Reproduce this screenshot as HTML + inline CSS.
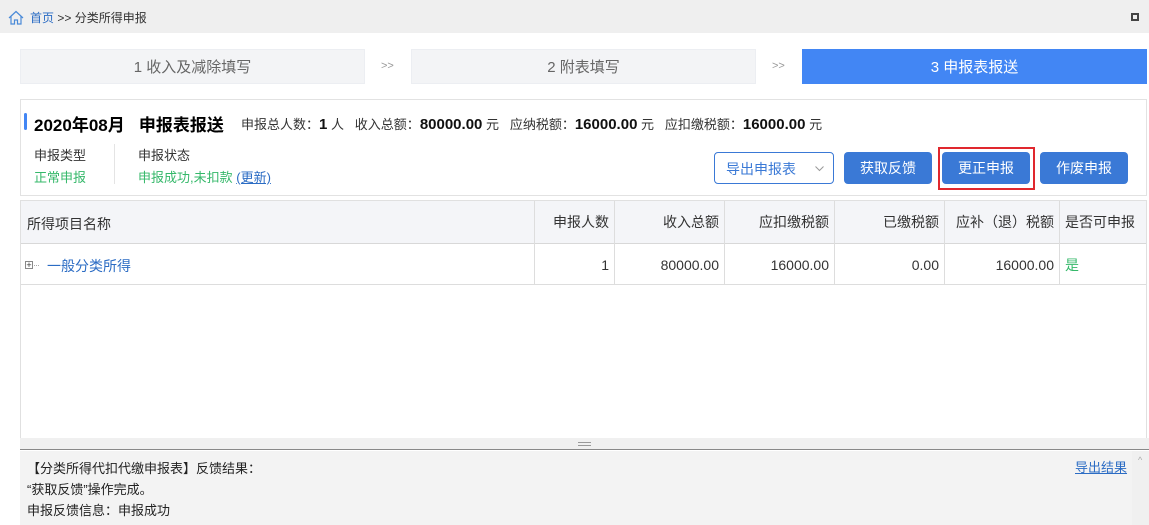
<!DOCTYPE html>
<html><head><meta charset="utf-8"><style>
*{box-sizing:border-box;margin:0;padding:0}
body{width:1149px;height:525px;overflow:hidden;background:#fff;font-family:"Liberation Sans","Noto Sans CJK SC",sans-serif;font-size:13px;color:#333;position:relative}
.abs{position:absolute}
.top{left:0;top:0;width:1149px;height:33px;background:#efefef}
.step{top:49px;height:35px;line-height:35px;text-align:center;font-size:15px;color:#666;background:#f3f4f6;border:1px solid #eceef2}
.arr{top:49px;line-height:35px;font-size:11px;color:#999}
.box{left:20px;top:99px;width:1127px;height:97px;border:1px solid #e2e2e2}
.btn{top:152px;height:32px;line-height:32px;text-align:center;color:#fff;background:#3a79d6;border-radius:4px;font-size:14px}
.tbl{left:20px;top:200px;width:1127px;height:238px;border:1px solid #e0e0e0;border-bottom:none}
.cell{position:absolute;border-left:1px solid #ddd;padding:0 5px;text-align:right;font-size:14px}
</style></head><body>
<div class="abs top"></div>
<svg class="abs" style="left:8px;top:10px" width="16" height="15" viewBox="0 0 16 15"><path d="M1 8 L8 1.5 L15 8 M3 6.5 V14 H6.5 V10 H9.5 V14 H13 V6.5" fill="none" stroke="#4a8ad8" stroke-width="1.2"/></svg>
<div class="abs" style="left:30px;top:9px;font-size:12px"><span style="color:#2b6cc4">首页</span> &gt;&gt; 分类所得申报</div>
<div class="abs" style="left:1131px;top:13px;width:8px;height:8px;border:2px solid #444"></div>

<div class="abs step" style="left:20px;width:345px">1 收入及减除填写</div>
<div class="abs arr" style="left:381px">&gt;&gt;</div>
<div class="abs step" style="left:411px;width:345px">2 附表填写</div>
<div class="abs arr" style="left:772px">&gt;&gt;</div>
<div class="abs step" style="left:802px;width:345px;background:#4286f4;border-color:#4286f4;color:#fff">3 申报表报送</div>

<div class="abs box"></div>
<div class="abs" style="left:24px;top:113px;width:3px;height:17px;background:#4286f4;border-radius:2px"></div>
<div class="abs" style="left:34px;top:111px;font-size:17px;font-weight:bold;color:#000">2020年08月&nbsp;&nbsp;&nbsp;申报表报送</div>
<div class="abs" style="left:241px;top:114px;font-size:13px;color:#333;white-space:nowrap">申报总人数：<b style="font-size:15px;color:#111">1</b> 人&nbsp;&nbsp;&nbsp;收入总额：<b style="font-size:15px;color:#111">80000.00</b> 元&nbsp;&nbsp;&nbsp;应纳税额：<b style="font-size:15px;color:#111">16000.00</b> 元&nbsp;&nbsp;&nbsp;应扣缴税额：<b style="font-size:15px;color:#111">16000.00</b> 元</div>
<div class="abs" style="left:34px;top:145px;font-size:13px">申报类型</div>
<div class="abs" style="left:34px;top:167px;font-size:13px;color:#35b86a">正常申报</div>
<div class="abs" style="left:114px;top:144px;width:1px;height:40px;background:#e4e4e4"></div>
<div class="abs" style="left:138px;top:145px;font-size:13px">申报状态</div>
<div class="abs" style="left:138px;top:167px;font-size:13px;color:#35b86a">申报成功,未扣款 <span style="color:#2b6cc4;text-decoration:underline">(更新)</span></div>

<div class="abs btn" style="left:714px;width:120px;background:#fff;border:1px solid #3a79d6;color:#3a79d6;text-align:left;padding-left:11px">导出申报表
<svg style="position:absolute;right:9px;top:13px" width="9" height="6" viewBox="0 0 9 6"><path d="M0.5 0.5 L4.5 4.5 L8.5 0.5" fill="none" stroke="#999" stroke-width="1"/></svg></div>
<div class="abs btn" style="left:844px;width:88px">获取反馈</div>
<div class="abs" style="left:938px;top:147px;width:97px;height:43px;border:2px solid #e0282e"></div>
<div class="abs btn" style="left:942px;width:88px">更正申报</div>
<div class="abs btn" style="left:1040px;width:88px">作废申报</div>

<div class="abs tbl"></div>
<div class="abs" style="left:21px;top:201px;width:1125px;height:43px;background:#f4f5f8;border-bottom:1px solid #d8d8d8"></div>
<div class="abs" style="left:21px;top:284px;width:1125px;height:1px;background:#ddd"></div>
<div class="abs" style="left:27px;top:214px;font-size:14px">所得项目名称</div>
<div class="abs" style="left:25px;top:261px;width:8px;height:8px;border:1px solid #888;font-size:9px;line-height:6px;text-align:center">+</div>
<div class="abs" style="left:34px;top:265px;width:5px;border-top:1px dotted #aaa"></div>
<div class="abs" style="left:47px;top:256px;font-size:14px;color:#2b6cc4">一般分类所得</div>
<div class="cell" style="left:534px;top:201px;width:80px;height:83px;line-height:43px">申报人数<br>1</div>
<div class="cell" style="left:614px;top:201px;width:110px;height:83px;line-height:43px">收入总额<br>80000.00</div>
<div class="cell" style="left:724px;top:201px;width:110px;height:83px;line-height:43px">应扣缴税额<br>16000.00</div>
<div class="cell" style="left:834px;top:201px;width:110px;height:83px;line-height:43px">已缴税额<br>0.00</div>
<div class="cell" style="left:944px;top:201px;width:115px;height:83px;line-height:43px">应补（退）税额<br>16000.00</div>
<div class="cell" style="left:1059px;top:201px;width:88px;height:83px;line-height:43px;text-align:left">是否可申报<br><span style="color:#35b86a">是</span></div>

<div class="abs" style="left:20px;top:438px;width:1129px;height:12px;background:#f0f0f0;border-bottom:1px solid #888"></div>
<div class="abs" style="left:578px;top:442px;width:13px;height:4px;border-top:1px solid #999;border-bottom:1px solid #999"></div>
<div class="abs" style="left:20px;top:451px;width:1129px;height:74px;background:#f3f3f3"></div>
<div class="abs" style="left:1132px;top:451px;width:17px;height:74px;background:#f0f0f0"></div>
<div class="abs" style="left:1138px;top:455px;font-size:9px;color:#aaa">^</div>
<div class="abs" style="left:27px;top:458px;font-size:13px;line-height:21px;color:#222">【分类所得代扣代缴申报表】反馈结果：<br>“获取反馈”操作完成。<br>申报反馈信息：申报成功</div>
<div class="abs" style="left:1075px;top:457px;font-size:13px;color:#2b6cc4;text-decoration:underline">导出结果</div>
</body></html>
